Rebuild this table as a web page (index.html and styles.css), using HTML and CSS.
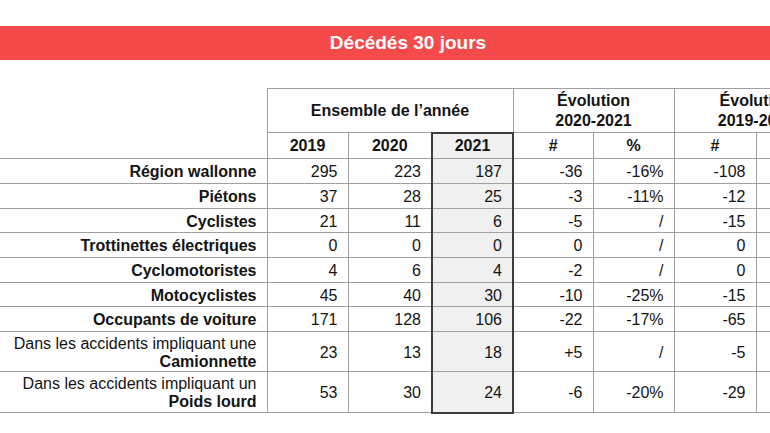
FILE: index.html
```html
<!DOCTYPE html>
<html lang="fr">
<head>
<meta charset="utf-8">
<title>Décédés 30 jours</title>
<link rel="stylesheet" href="styles.css">
</head>
<body>
<div class="page">
  <div class="banner">Décédés 30 jours</div>
  <table class="stats">
    <colgroup>
      <col class="c-label">
      <col class="c-2019">
      <col class="c-2020">
      <col class="c-2021">
      <col class="c-n1">
      <col class="c-p1">
      <col class="c-n2">
      <col class="c-p2">
    </colgroup>
    <thead>
      <tr class="h1">
        <th class="blank" rowspan="2"></th>
        <th class="grp" colspan="3">Ensemble de l’année</th>
        <th class="grp" colspan="2">Évolution<br>2020-2021</th>
        <th class="grp" colspan="2">Évolution<br>2019-2021</th>
      </tr>
      <tr class="h2">
        <th>2019</th>
        <th>2020</th>
        <th class="cur">2021</th>
        <th>#</th>
        <th>%</th>
        <th>#</th>
        <th></th>
      </tr>
    </thead>
    <tbody>
      <tr class="r25"><th class="lbl">Région wallonne</th><td>295</td><td>223</td><td class="cur">187</td><td>-36</td><td>-16%</td><td>-108</td><td></td></tr>
      <tr class="r25"><th class="lbl">Piétons</th><td>37</td><td>28</td><td class="cur">25</td><td>-3</td><td>-11%</td><td>-12</td><td></td></tr>
      <tr class="r24"><th class="lbl">Cyclistes</th><td>21</td><td>11</td><td class="cur">6</td><td>-5</td><td>/</td><td>-15</td><td></td></tr>
      <tr class="r25"><th class="lbl">Trottinettes électriques</th><td>0</td><td>0</td><td class="cur">0</td><td>0</td><td>/</td><td>0</td><td></td></tr>
      <tr class="r25"><th class="lbl">Cyclomotoristes</th><td>4</td><td>6</td><td class="cur">4</td><td>-2</td><td>/</td><td>0</td><td></td></tr>
      <tr class="r24"><th class="lbl">Motocyclistes</th><td>45</td><td>40</td><td class="cur">30</td><td>-10</td><td>-25%</td><td>-15</td><td></td></tr>
      <tr class="r25"><th class="lbl">Occupants de voiture</th><td>171</td><td>128</td><td class="cur">106</td><td>-22</td><td>-17%</td><td>-65</td><td></td></tr>
      <tr class="r40"><th class="lbl"><span class="sub">Dans les accidents impliquant une</span><br>Camionnette</th><td>23</td><td>13</td><td class="cur">18</td><td>+5</td><td>/</td><td>-5</td><td></td></tr>
      <tr class="r41 last"><th class="lbl"><span class="sub">Dans les accidents impliquant un</span><br>Poids lourd</th><td>53</td><td>30</td><td class="cur">24</td><td>-6</td><td>-20%</td><td>-29</td><td></td></tr>
    </tbody>
  </table>
</div>
</body>
</html>
```
FILE: styles.css
```css
html, body {
  margin: 0;
  padding: 0;
  background: #ffffff;
  overflow: hidden;
}

.page {
  width: 840px;
  padding-top: 26px;
  font-family: "Liberation Sans", Arial, sans-serif;
  color: #141414;
}

.banner {
  width: 816px;
  height: 34px;
  background: #f44a4a;
  color: #ffffff;
  font-weight: bold;
  font-size: 19px;
  line-height: 34px;
  text-align: center;
}

.stats {
  margin-top: 28px;
  width: 838px;
  table-layout: fixed;
  border-collapse: collapse;
  font-size: 16px;
}

.c-label { width: 267px; }
.c-2019 { width: 81px; }
.c-2020 { width: 84px; }
.c-2021 { width: 81px; }
.c-n1 { width: 80px; }
.c-p1 { width: 81px; }
.c-n2 { width: 82px; }
.c-p2 { width: 82px; }

.stats th,
.stats td {
  border: 1px solid #a0a0a0;
  padding: 0 10px 0 0;
  white-space: nowrap;
}

.stats thead th {
  font-weight: bold;
  text-align: center;
  padding: 0;
}

.stats .blank {
  border-top: none;
  border-left: none;
}

.h1 { height: 44px; }
.h1 .grp { line-height: 20px; padding-top: 1px; }
.h2 { height: 26px; }

.stats td {
  text-align: right;
  font-weight: normal;
  padding-top: 2px;
}

.stats .lbl {
  border-left: none;
  text-align: right;
  font-weight: bold;
  line-height: 18px;
  padding-top: 2px;
}

.lbl .sub { font-weight: normal; }

.r24 { height: 24px; }
.r25 { height: 25px; }
.r40 { height: 40px; }
.r41 { height: 41px; }

.stats .cur {
  background: #f0f0f0;
  border-left: 2px solid #3c3c3c;
  border-right: 2px solid #3c3c3c;
}

.h2 .cur { border-top: 2px solid #3c3c3c; }
.last .cur { border-bottom: 2px solid #3c3c3c; }
```
